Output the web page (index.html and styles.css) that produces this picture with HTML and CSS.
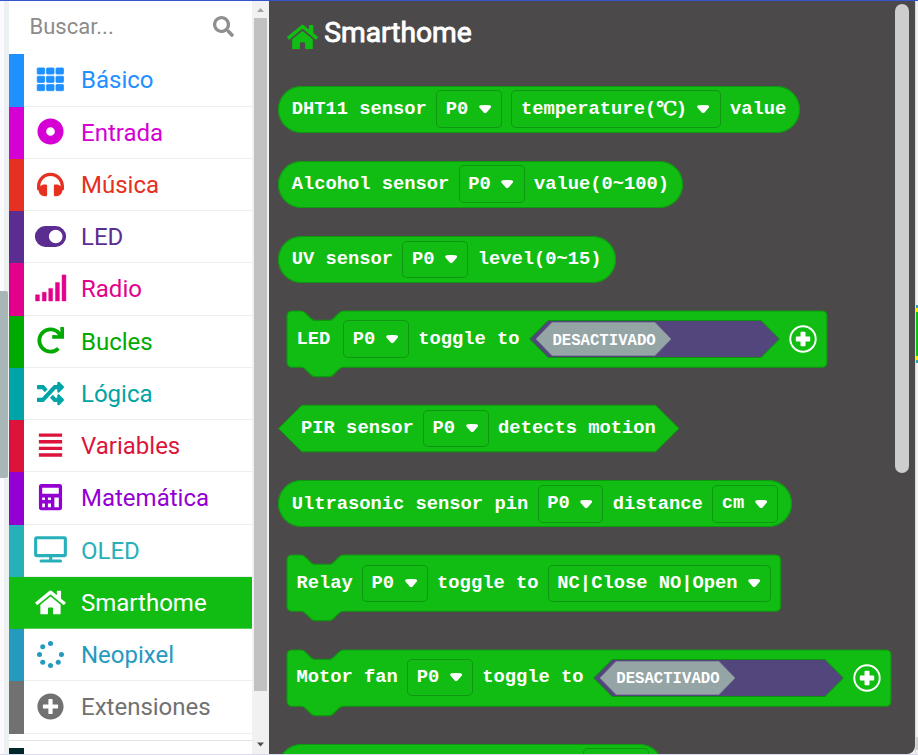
FILE: index.html
```html
<!DOCTYPE html>
<html lang="es">
<head>
<meta charset="utf-8">
<title>Smarthome</title>
<link rel="stylesheet" href="styles.css">
</head>
<body>
<svg class="defs" width="0" height="0">
  <symbol id="home" viewBox="0 0 576 512"><path d="M280.37 148.26L96 300.11V464a16 16 0 0 0 16 16l112.06-.29a16 16 0 0 0 15.92-16V368a16 16 0 0 1 16-16h64a16 16 0 0 1 16 16v95.64a16 16 0 0 0 16 16.05L464 480a16 16 0 0 0 16-16V300L295.67 148.26a12.19 12.19 0 0 0-15.3 0zM571.6 251.47L488 182.56V44.05a12 12 0 0 0-12-12h-56a12 12 0 0 0-12 12v72.61L318.47 43a48 48 0 0 0-61 0L4.34 251.47a12 12 0 0 0-1.6 16.9l25.5 31A12 12 0 0 0 45.15 301l235.22-193.74a12.19 12.19 0 0 1 15.3 0L530.9 301a12 12 0 0 0 16.9-1.6l25.5-31a12 12 0 0 0-1.7-16.93z"/></symbol>
  <symbol id="arrow" viewBox="0 0 12 8.4"><path d="M1.6 .2Q6 -.2 10.4 .2Q12.6 .8 11.4 2.7L7.6 7.1Q6 8.9 4.4 7.1L.6 2.7Q-.6 .8 1.6 .2Z"/></symbol>
  <symbol id="plus" viewBox="0 0 28 28"><circle cx="14" cy="14" r="12.7" fill="none" stroke="#fff" stroke-width="1.9"/><path d="M12.3 6.8h3.4q.8 0 .8.8v3.9h3.9q.8 0 .8.8v3.4q0 .8-.8.8h-3.9v3.9q0 .8-.8.8h-3.4q-.8 0-.8-.8v-3.9H7.6q-.8 0-.8-.8v-3.4q0-.8.8-.8h3.9V7.600q0-.8.8-.8z"/></symbol>
  <symbol id="toggle" viewBox="0 0 251 38">
    <path d="M.7 19L19.200 .5H232L250.400 19L232 37.500H19.200Z" fill="#53467c" stroke="#0e8f10"/>
    <path d="M7 19L23 2.500H126L142 19L126 35.500H23Z" fill="#95a5a6" stroke="#838b9b" stroke-width=".8"/>
  </symbol>
</svg>
<div class="topline"></div>
<main class="editor">
  <div class="simulator"><div class="handle"></div></div>
  <aside class="toolbox">
    <div class="search"><span>Buscar...</span>
      <svg viewBox="0 0 512 512"><path d="M505 442.700L405.300 343c-4.500-4.500-10.600-7-17-7H372c27.600-35.300 44-79.700 44-128C416 93.100 322.900 0 208 0S0 93.100 0 208s93.100 208 208 208c48.300 0 92.700-16.400 128-44v16.300c0 6.400 2.500 12.500 7 17l99.700 99.700c9.400 9.400 24.600 9.400 33.900 0l28.300-28.300c9.400-9.400 9.400-24.600.1-34zM208 336c-70.700 0-128-57.200-128-128 0-70.700 57.200-128 128-128 70.700 0 128 57.200 128 128 0 70.700-57.200 128-128 128z"/></svg>
    </div>
    <div class="cat basic"><div class="row"><svg class="ico" viewBox="0 0 28 28"><path d="M1 2h6.200q.8 0 .8.800v4.800q0 .8-.8.800H1q-.8 0-.8-.8V2.800q0-.8.800-.8zM10.700 2h6.200q.8 0 .8.800v4.800q0 .8-.8.800h-6.200q-.8 0-.8-.8V2.800q0-.8.800-.8zM20.500 2h6.200q.8 0 .8.800v4.800q0 .8-.8.800h-6.200q-.8 0-.8-.8V2.800q0-.8.800-.8zM1 10.600h6.200q.8 0 .8.800v4.800q0 .8-.8.800H1q-.8 0-.8-.8v-4.800q0-.8.800-.8zM10.700 10.600h6.200q.8 0 .8.800v4.800q0 .8-.8.800h-6.200q-.8 0-.8-.8v-4.800q0-.8.800-.8zM20.500 10.600h6.200q.8 0 .8.800v4.800q0 .8-.8.800h-6.200q-.8 0-.8-.8v-4.800q0-.8.800-.8zM1 19.200h6.200q.8 0 .8.800v4.800q0 .8-.8.800H1q-.8 0-.8-.8V20q0-.8.800-.8zM10.700 19.200h6.200q.8 0 .8.800v4.800q0 .8-.8.800h-6.200q-.8 0-.8-.8V20q0-.8.800-.8zM20.500 19.200h6.200q.8 0 .8.800v4.800q0 .8-.8.800h-6.200q-.8 0-.8-.8V20q0-.8.800-.8z" stroke="currentColor" stroke-width=".8"/></svg><span>Básico</span></div></div>
    <div class="cat input"><div class="row"><svg class="ico" viewBox="0 0 28 28"><circle cx="14" cy="14" r="9" fill="none" stroke="currentColor" stroke-width="9"/></svg><span>Entrada</span></div></div>
    <div class="cat music"><div class="row"><svg class="ico" viewBox="0 0 512 512"><path d="M256 32C114.520 32 0 146.497 0 288v48a32 32 0 0 0 17.689 28.622l14.383 7.191C34.083 431.903 83.421 480 144 480h24c13.255 0 24-10.745 24-24V280c0-13.255-10.745-24-24-24h-24c-31.342 0-59.671 12.879-80 33.627V288c0-105.869 86.131-192 192-192s192 86.131 192 192v1.627C427.671 268.879 399.342 256 368 256h-24c-13.255 0-24 10.745-24 24v176c0 13.255 10.745 24 24 24h24c60.579 0 109.917-48.098 111.928-108.187l14.382-7.191A32 32 0 0 0 512 336v-48c0-141.479-114.496-256-256-256z"/></svg><span>Música</span></div></div>
    <div class="cat led"><div class="row"><svg class="ico" viewBox="0 0 28 28"><path fill-rule="evenodd" d="M8.600 3.200h10.800a10.800 10.800 0 0 1 0 21.600H8.600a10.800 10.800 0 0 1 0-21.600zM19.400 6.900a7.100 7.100 0 1 0 0 14.200a7.100 7.100 0 1 0 0-14.200z"/></svg><span>LED</span></div></div>
    <div class="cat radio"><div class="row"><svg class="ico" viewBox="0 0 28 28"><path d="M-1.500 21.200h4V27.500h-4zM5.500 18.500h4v9h-4zM12.200 14.500h4v13h-4zM19.200 8.500h4v19h-4zM26 .5h4v27h-4z" stroke="currentColor" stroke-width=".5" stroke-linejoin="round" transform="translate(0 -.6)"/></svg><span>Radio</span></div></div>
    <div class="cat loops"><div class="row"><svg class="ico" viewBox="0 0 512 512"><path d="M500.330 0h-47.410a12 12 0 0 0-12 12.570l4 82.760A247.420 247.420 0 0 0 256 8C119.340 8 7.900 119.530 8 256.190 8.100 393.070 119.100 504 256 504a247.100 247.100 0 0 0 166.180-63.910 12 12 0 0 0 .48-17.430l-34-34a12 12 0 0 0-16.380-.55A176 176 0 1 1 402.100 157.800l-101.530-4.870a12 12 0 0 0-12.570 12v47.410a12 12 0 0 0 12 12h200.330a12 12 0 0 0 12-12V12a12 12 0 0 0-12-12z"/></svg><span>Bucles</span></div></div>
    <div class="cat logic"><div class="row"><svg class="ico" viewBox="0 0 512 512"><path d="M504.971 359.029c9.373 9.373 9.373 24.569 0 33.941l-80 79.984c-15.010 15.010-40.971 4.490-40.971-16.971V416h-58.785a12.004 12.004 0 0 1-8.773-3.812l-70.556-75.596 53.333-57.143L352 336h32v-39.981c0-21.438 25.943-31.998 40.971-16.971l80 79.981zM12 176h84l52.781 56.551 53.333-57.143-70.556-75.596A11.999 11.999 0 0 0 122.785 96H12c-6.627 0-12 5.373-12 12v56c0 6.627 5.373 12 12 12zm372 0v39.984c0 21.460 25.961 31.980 40.971 16.971l80-79.984c9.373-9.373 9.373-24.569 0-33.941l-80-79.981C409.943 24.021 384 34.582 384 56.019V96h-58.785a12.004 12.004 0 0 0-8.773 3.812L96 336H12c-6.627 0-12 5.373-12 12v56c0 6.627 5.373 12 12 12h110.785c3.326 0 6.503-1.381 8.773-3.812L352 176h32z"/></svg><span>Lógica</span></div></div>
    <div class="cat vars"><div class="row"><svg class="ico" viewBox="0 0 28 28"><path d="M3.700 3.200h20.600M3.700 10.100h20.600M3.700 17h20.600M3.700 23.900h20.600" stroke="currentColor" stroke-width="3.500" stroke-linecap="square"/></svg><span>Variables</span></div></div>
    <div class="cat math"><div class="row"><svg class="ico" viewBox="0 0 28 28"><path fill-rule="evenodd" d="M4.600 0h18.800q2.600 0 2.600 2.600v22q0 2.600-2.600 2.600H4.600Q2 27.200 2 24.600V2.600Q2 0 4.600 0zM5.400 3.800v6.300h17.200V3.800zM5.400 13.900v2.700h2.800v-2.700zM11.300 13.900v2.700h3.200v-2.700zM18 13.900v10.200h4.600V13.900zM5.400 20.300v3.800h2.800v-3.800zM11.300 20.300v3.800h3.200v-3.800z"/></svg><span>Matemática</span></div></div>
    <div class="cat oled"><div class="row"><svg class="ico" viewBox="0 0 28 28"><path fill-rule="evenodd" d="M-.2 .2h28.400q2.800 0 2.800 2.800v16.300q0 2.800-2.800 2.800h-12.400v2.200h8.600q1.600 0 1.600 1.600t-1.600 1.600H4.200q-1.600 0-1.600-1.600t1.600-1.600h8.400v-2.200H-.2Q-3 22.100-3 19.300V3Q-3 .2-.2 .2zM.2 3.400v15.300h27.600V3.400z"/></svg><span>OLED</span></div></div>
    <div class="cat smart selected"><div class="row"><svg class="ico wide"><use href="#home"/></svg><span>Smarthome</span></div></div>
    <div class="cat neo"><div class="row"><svg class="ico" viewBox="0 0 512 512"><circle cx="256" cy="48" r="48"/><circle cx="256" cy="464" r="48"/><circle cx="464" cy="256" r="48"/><circle cx="48" cy="256" r="48"/><circle cx="109" cy="109" r="48"/><circle cx="109" cy="403" r="48"/><circle cx="403" cy="403" r="48"/></svg><span>Neopixel</span></div></div>
    <div class="cat ext"><div class="row"><svg class="ico" viewBox="0 0 512 512"><path d="M256 8C119 8 8 119 8 256s111 248 248 248 248-111 248-248S393 8 256 8zm144 276c0 6.600-5.400 12-12 12h-92v92c0 6.600-5.400 12-12 12h-56c-6.600 0-12-5.400-12-12v-92h-92c-6.600 0-12-5.400-12-12v-56c0-6.600 5.400-12 12-12h92v-92c0-6.600 5.400-12 12-12h56c6.600 0 12 5.400 12 12v92h92c6.600 0 12 5.400 12 12v56z"/></svg><span>Extensiones</span></div></div>
    <div class="divider"></div>
    <div class="cat next"><div class="row"></div></div>
  </aside>
  <div class="scrollbar">
    <svg viewBox="0 0 17 17"><path d="M5 11h7L8.500 7z" fill="#a3a3a3"/></svg>
    <div class="thumb"></div>
    <svg viewBox="0 0 17 17"><path d="M5 6.500h7l-3.500 4z" fill="#505050"/></svg>
  </div>
  <section class="flyout">
    <div class="list">
      <h1><svg><use href="#home"/></svg><span>Smarthome</span></h1>

      <div class="pill"><span>DHT11 sensor</span><div class="field">P0<svg><use href="#arrow"/></svg></div><div class="field"><span>temperature(<span class="deg">℃</span>)</span><svg><use href="#arrow"/></svg></div><span>value</span></div>
      <div class="pill"><span>Alcohol sensor</span><div class="field">P0<svg><use href="#arrow"/></svg></div><span>value(0~100)</span></div>
      <div class="pill"><span>UV sensor</span><div class="field">P0<svg><use href="#arrow"/></svg></div><span>level(0~15)</span></div>

      <div class="stmt">
        <svg class="shape" width="540" height="66"><path transform="scale(1.172)" d="M0 4A4 4 0 0 1 4 0H12c2 0 3 1 4 2l4 4c1 1 2 2 4 2h12c2 0 3-1 4-2l4-4c1-1 2-2 4-2H456.700a4 4 0 0 1 4 4v40a4 4 0 0 1-4 4H48c-2 0-3 1-4 2l-4 4c-1 1-2 2-4 2h-12c-2 0-3-1-4-2l-4-4c-1-1-2-2-4-2H4a4 4 0 0 1-4-4z"/></svg>
        <div class="inputs"><span class="first">LED</span><div class="field">P0<svg><use href="#arrow"/></svg></div><span>toggle to</span><div class="switch"><svg><use href="#toggle"/></svg><span>DESACTIVADO</span></div><svg class="plus"><use href="#plus"/></svg></div>
      </div>

      <div class="hex">
        <svg class="shape" width="401" height="47"><path d="M.5 23.500L23.900 .2H377.600L401 23.500L377.600 46.800H23.900Z"/></svg>
        <div class="inputs"><span>PIR sensor</span><div class="field">P0<svg><use href="#arrow"/></svg></div><span>detects motion</span></div>
      </div>

      <div class="pill"><span>Ultrasonic sensor pin</span><div class="field">P0<svg><use href="#arrow"/></svg></div><span>distance</span><div class="field">cm<svg><use href="#arrow"/></svg></div></div>

      <div class="stmt">
        <svg class="shape" width="494" height="66"><path transform="scale(1.172)" d="M0 4A4 4 0 0 1 4 0H12c2 0 3 1 4 2l4 4c1 1 2 2 4 2h12c2 0 3-1 4-2l4-4c1-1 2-2 4-2H417.100a4 4 0 0 1 4 4v40a4 4 0 0 1-4 4H48c-2 0-3 1-4 2l-4 4c-1 1-2 2-4 2h-12c-2 0-3-1-4-2l-4-4c-1-1-2-2-4-2H4a4 4 0 0 1-4-4z"/></svg>
        <div class="inputs"><span class="first">Relay</span><div class="field">P0<svg><use href="#arrow"/></svg></div><span>toggle to</span><div class="field">NC|Close NO|Open<svg><use href="#arrow"/></svg></div></div>
      </div>

      <div class="stmt">
        <svg class="shape" width="604" height="66"><path transform="scale(1.172)" d="M0 4A4 4 0 0 1 4 0H12c2 0 3 1 4 2l4 4c1 1 2 2 4 2h12c2 0 3-1 4-2l4-4c1-1 2-2 4-2H511.300a4 4 0 0 1 4 4v40a4 4 0 0 1-4 4H48c-2 0-3 1-4 2l-4 4c-1 1-2 2-4 2h-12c-2 0-3-1-4-2l-4-4c-1-1-2-2-4-2H4a4 4 0 0 1-4-4z"/></svg>
        <div class="inputs"><span class="first">Motor fan</span><div class="field">P0<svg><use href="#arrow"/></svg></div><span>toggle to</span><div class="switch"><svg><use href="#toggle"/></svg><span>DESACTIVADO</span></div><svg class="plus"><use href="#plus"/></svg></div>
      </div>

      <div class="pill last"><div class="field"></div></div>
    </div>
    <div class="flythumb"></div>
  </section>
  <div class="workspace"><div class="peek"></div><div class="hscroll"></div></div>
</main>
<div class="bottomline"></div>
</body>
</html>
```
FILE: styles.css
```css
* { box-sizing: border-box; }
body { margin: 0; width: 918px; height: 755px; overflow: hidden; display: flex; flex-direction: column; background: #fff; font-family: Roboto, sans-serif; }
svg { display: block; flex: none; fill: currentColor; overflow: visible; }
.defs { height: 0; }
.topline { flex: none; height: 1px; background: #3454d1; }
.bottomline { flex: none; height: 1px; background: #d9daee; }
.editor { display: flex; height: 753px; overflow: hidden; background: #f1f1f1; }

.simulator { flex: none; width: 9px; padding-top: 290px; background: linear-gradient(90deg, #fbfbff 4px, #ecf0f1 4px); }
.handle { width: 8px; height: 187px; border-radius: 0 2px 2px 0; background: #a8b6b7; }

.toolbox { flex: none; width: 243px; height: 753px; overflow: hidden; background: #fff; }
.search { display: flex; justify-content: space-between; align-items: center; height: 53.400px; padding: 0 18px 3px 20.500px; color: #8c8c8c; font-size: 22px; }
.search svg { width: 21px; height: 21px; color: #8f8f8f; }
.cat { height: 52.250px; border-left: 15px solid; }
.row { display: flex; align-items: center; height: 100%; padding: 0 0 1px 13px; gap: 17px; border-bottom: 1px solid #ecf0f1; font-size: 24px; }
.row span { position: relative; top: .85px; }
.ico { width: 27px; height: 27px; }
.ico.wide { width: 31px; height: 27px; margin: 0 -2px; }
.basic { color: #1e90ff; }
.input { color: #d400d4; }
.music { color: #e63022; }
.led { color: #5c2d91; }
.radio { color: #e3008c; }
.loops { color: #00aa00; }
.logic { color: #00a4a6; }
.vars { color: #dc143c; }
.math { color: #9400d3; }
.oled { color: #27b0ba; }
.smart { border-color: #11bd13; }
.neo { color: #2699bf; }
.ext { color: #717171; }
.selected .row { color: #fff; background: #11bd13; border-color: #58d059; }
.divider { height: 14px; background: linear-gradient(#fff 6px, #e3e4e5 6px, #e3e4e5 7px, #fff 7px); }
.next { color: #00272b; }

.scrollbar { flex: none; display: flex; flex-direction: column; width: 17px; background: #f1f1f1; }
.scrollbar svg { width: 17px; height: 17px; }
.thumb { width: 13px; height: 673px; margin: 0 0 45px 2px; background: #c1c1c1; }

.flyout { flex: none; display: flex; width: 646px; background: #4c494a; border-radius: 0 0 8px 0; overflow: hidden; }
.list { flex: none; width: 626px; padding: 15px 0 0 8.700px; color: #fff; font: bold 18.770px/22px "Liberation Mono", monospace; white-space: nowrap; }
h1 { display: flex; align-items: center; gap: 6px; height: 35px; margin: 0 0 34.600px; padding-left: 9.500px; font: 28.200px/34px Roboto, sans-serif; -webkit-text-stroke: .9px #fff; }
h1 span { position: relative; top: -.5px; }
h1 svg { width: 31px; height: 28px; margin-top: 6px; color: #11bd13; -webkit-text-stroke: 0; }

.pill { display: flex; align-items: center; gap: 9.400px; width: max-content; height: 47px; margin-bottom: 28.150px; padding: 0 14px; border-radius: 24px; background: #11bd13; box-shadow: inset 0 0 0 1px #0e9710; }
.field { display: flex; align-items: center; gap: 9.500px; height: 37.500px; padding: 0 10.300px 1px 9.600px; border-radius: 5px; box-shadow: inset 0 0 0 1px #0e9710; }
.field svg { width: 12.300px; height: 8.600px; margin: 1px .6px 0 1px; }
.pill > span, .inputs > span { position: relative; top: -.3px; }
.deg { display: inline-block; width: 19.500px; height: 22px; vertical-align: top; font-family: "Liberation Serif", "DejaVu Serif", serif; font-weight: normal; -webkit-text-stroke: .6px #fff; }
.stmt, .hex { display: grid; width: max-content; margin-bottom: 28.150px; }
.stmt { height: 66px; margin-left: 9.300px; }
.hex { height: 47px; }
.shape, .inputs { grid-area: 1 / 1; }
.shape path { fill: #11bd13; stroke: #0e9710; }
.inputs { display: flex; align-items: center; gap: 9.300px; }
.stmt .inputs { height: 56px; padding-left: 9.400px; }
.hex .inputs { padding-left: 23.400px; }
.first { min-width: 37.500px; }
.switch { display: grid; width: 251px; height: 38px; }
.switch svg, .switch span { grid-area: 1 / 1; width: 251px; height: 38px; }
.switch span { padding: 1.500px 0 0 23.500px; z-index: 1; font-size: 15.650px; line-height: 38px; }
.plus { width: 28px; height: 28px; }
.last { width: 385px; justify-content: flex-end; }
.last .field { width: 66px; }
.flythumb { width: 13.500px; height: 469px; margin-top: 3px; border-radius: 7px; background: #cdcdcd; }

.workspace { flex: 1; padding-top: 304px; overflow: hidden; border-left: 1px solid #dadada; }
.peek { height: 58px; background: linear-gradient(#2ba3b5 3px, #ffee00 3px, #ffee00 7px, #11bd13 7px, #11bd13 51px, #ffee00 51px, #ffee00 55px, #2ba3b5 55px); }
.hscroll { height: 13px; margin-top: 374px; background: #cfcfcf; }
```
